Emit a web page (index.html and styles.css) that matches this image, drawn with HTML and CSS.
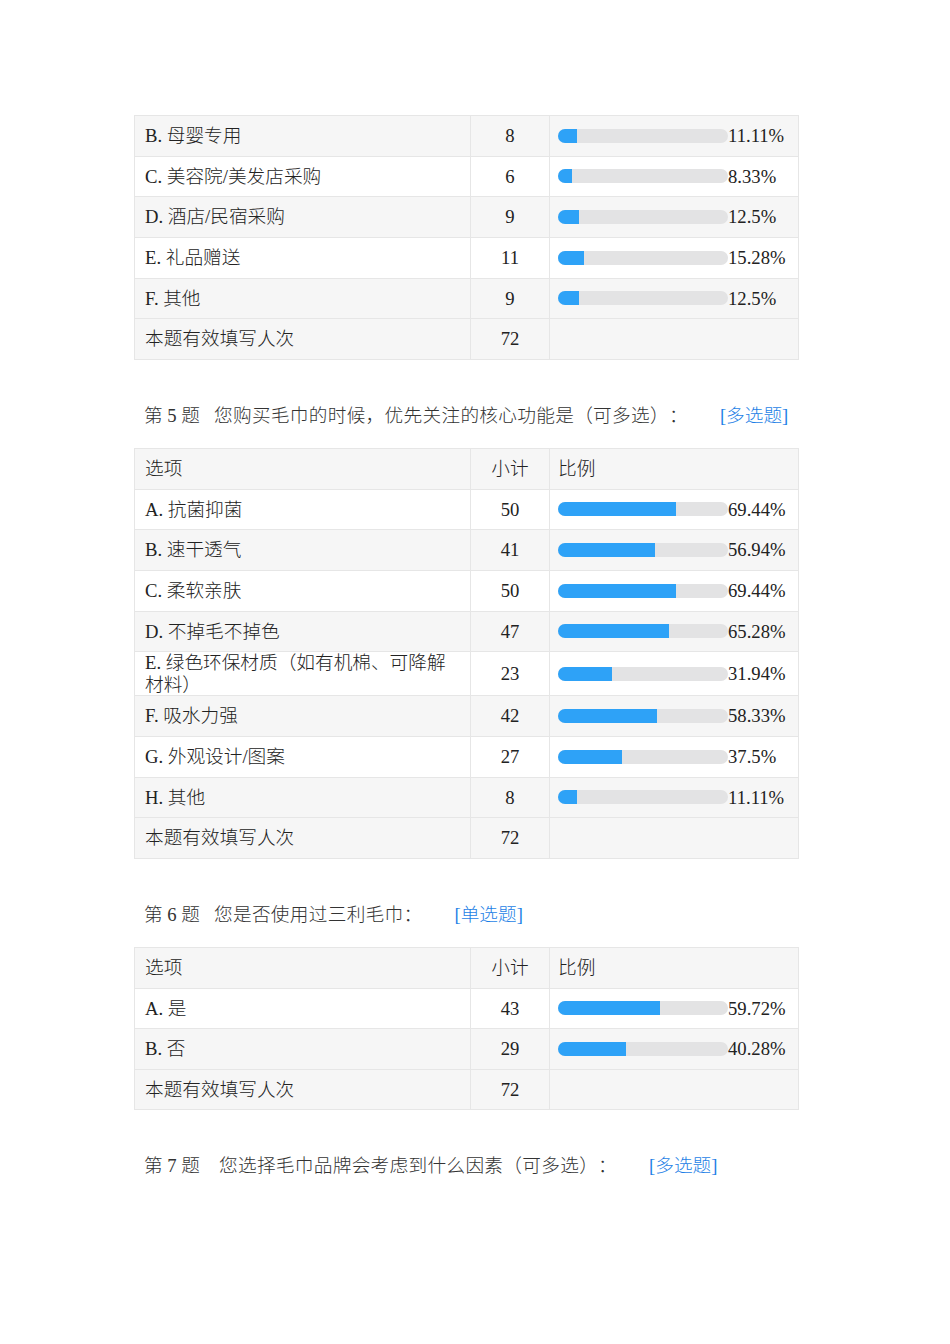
FILE: index.html
```html
<!DOCTYPE html>
<html lang="zh">
<head>
<meta charset="utf-8">
<link rel="stylesheet" href="styles.css">
</head>
<body>
<div class="page">
  <table class="stat">
    <colgroup><col class="c1"><col class="c2"><col class="c3"></colgroup>
    <tbody>
      <tr class="alt"><td>B. 母婴专用</td><td class="num">8</td><td class="pct"><div class="ratio"><span class="track"><span class="fill" style="width:11.11%"></span></span><span>11.11%</span></div></td></tr>
      <tr><td>C. 美容院/美发店采购</td><td class="num">6</td><td class="pct"><div class="ratio"><span class="track"><span class="fill" style="width:8.33%"></span></span><span>8.33%</span></div></td></tr>
      <tr class="alt"><td>D. 酒店/民宿采购</td><td class="num">9</td><td class="pct"><div class="ratio"><span class="track"><span class="fill" style="width:12.5%"></span></span><span>12.5%</span></div></td></tr>
      <tr><td>E. 礼品赠送</td><td class="num">11</td><td class="pct"><div class="ratio"><span class="track"><span class="fill" style="width:15.28%"></span></span><span>15.28%</span></div></td></tr>
      <tr class="alt"><td>F. 其他</td><td class="num">9</td><td class="pct"><div class="ratio"><span class="track"><span class="fill" style="width:12.5%"></span></span><span>12.5%</span></div></td></tr>
      <tr class="alt"><td>本题有效填写人次</td><td class="num">72</td><td class="pct"></td></tr>
    </tbody>
  </table>

  <section class="question">
    <div class="q-title"><span class="q-no">第 5 题</span><span class="q-text">您购买毛巾的时候，优先关注的核心功能是（可多选）：</span><span class="q-type">[多选题]</span></div>
    <table class="stat">
      <colgroup><col class="c1"><col class="c2"><col class="c3"></colgroup>
      <tbody>
        <tr class="alt"><td>选项</td><td class="num">小计</td><td class="pct">比例</td></tr>
        <tr><td>A. 抗菌抑菌</td><td class="num">50</td><td class="pct"><div class="ratio"><span class="track"><span class="fill" style="width:69.44%"></span></span><span>69.44%</span></div></td></tr>
        <tr class="alt"><td>B. 速干透气</td><td class="num">41</td><td class="pct"><div class="ratio"><span class="track"><span class="fill" style="width:56.94%"></span></span><span>56.94%</span></div></td></tr>
        <tr><td>C. 柔软亲肤</td><td class="num">50</td><td class="pct"><div class="ratio"><span class="track"><span class="fill" style="width:69.44%"></span></span><span>69.44%</span></div></td></tr>
        <tr class="alt"><td>D. 不掉毛不掉色</td><td class="num">47</td><td class="pct"><div class="ratio"><span class="track"><span class="fill" style="width:65.28%"></span></span><span>65.28%</span></div></td></tr>
        <tr><td>E. 绿色环保材质（如有机棉、可降解材料）</td><td class="num">23</td><td class="pct"><div class="ratio"><span class="track"><span class="fill" style="width:31.94%"></span></span><span>31.94%</span></div></td></tr>
        <tr class="alt"><td>F. 吸水力强</td><td class="num">42</td><td class="pct"><div class="ratio"><span class="track"><span class="fill" style="width:58.33%"></span></span><span>58.33%</span></div></td></tr>
        <tr><td>G. 外观设计/图案</td><td class="num">27</td><td class="pct"><div class="ratio"><span class="track"><span class="fill" style="width:37.5%"></span></span><span>37.5%</span></div></td></tr>
        <tr class="alt"><td>H. 其他</td><td class="num">8</td><td class="pct"><div class="ratio"><span class="track"><span class="fill" style="width:11.11%"></span></span><span>11.11%</span></div></td></tr>
        <tr class="alt"><td>本题有效填写人次</td><td class="num">72</td><td class="pct"></td></tr>
      </tbody>
    </table>
  </section>

  <section class="question">
    <div class="q-title"><span class="q-no">第 6 题</span><span class="q-text">您是否使用过三利毛巾：</span><span class="q-type">[单选题]</span></div>
    <table class="stat">
      <colgroup><col class="c1"><col class="c2"><col class="c3"></colgroup>
      <tbody>
        <tr class="alt"><td>选项</td><td class="num">小计</td><td class="pct">比例</td></tr>
        <tr><td>A. 是</td><td class="num">43</td><td class="pct"><div class="ratio"><span class="track"><span class="fill" style="width:59.72%"></span></span><span>59.72%</span></div></td></tr>
        <tr class="alt"><td>B. 否</td><td class="num">29</td><td class="pct"><div class="ratio"><span class="track"><span class="fill" style="width:40.28%"></span></span><span>40.28%</span></div></td></tr>
        <tr class="alt"><td>本题有效填写人次</td><td class="num">72</td><td class="pct"></td></tr>
      </tbody>
    </table>
  </section>

  <section class="question">
    <div class="q-title"><span class="q-no wide">第 7 题</span><span class="q-text">您选择毛巾品牌会考虑到什么因素（可多选）：</span><span class="q-type">[多选题]</span></div>
  </section>
</div>
</body>
</html>
```

FILE: styles.css
```css
html, body {
  margin: 0;
  padding: 0;
  background: #ffffff;
}

body {
  font-family: "Liberation Serif", "Noto Sans CJK SC", serif;
  font-size: 18.67px;
  font-weight: 300;
  color: #222222;
  text-spacing-trim: space-all;
}

.page {
  padding: 115px 0 0 134px;
  width: 664px;
}

.stat {
  border-collapse: collapse;
  width: 664px;
  table-layout: fixed;
}

.stat col.c1 { width: 336px; }
.stat col.c2 { width: 79px; }
.stat col.c3 { width: 249px; }

.stat td {
  border: 1px solid #e6e6e6;
  height: 40.67px;
  padding: 0 9px 0 10px;
  line-height: 21.5px;
  vertical-align: middle;
  box-sizing: border-box;
}

.stat tr.alt td {
  background: #f6f6f6;
}

.stat td.num {
  text-align: center;
  padding: 0;
}

.stat td.pct {
  padding-left: 8px;
  padding-right: 0;
}

.ratio {
  display: flex;
  align-items: center;
}

.track {
  display: block;
  width: 170px;
  height: 14px;
  border-radius: 7px;
  background: #e3e3e4;
  overflow: hidden;
  flex: none;
}

.fill {
  display: block;
  height: 100%;
  background: #2ea2f7;
}

.question {
  margin-top: 45px;
}

.q-title {
  line-height: 20px;
  margin-bottom: 23px;
  padding-left: 10px;
  color: #333333;
  white-space: nowrap;
  position: relative;
  top: 1px;
}

.q-no {
  margin-right: 14px;
}

.q-no.wide {
  margin-right: 19px;
}

.q-text {
  letter-spacing: 0.3px;
}

.q-type {
  color: #1e7fe6;
  margin-left: 32px;
}
```
